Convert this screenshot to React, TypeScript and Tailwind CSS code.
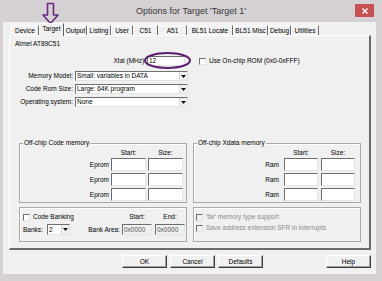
import React from 'react';

const sunken =
  'border border-t-[#6e6e6e] border-l-[#6e6e6e] border-r-[#e4e4e4] border-b-[#e4e4e4]';

function Check({ disabled = false }: { disabled?: boolean }) {
  return (
    <span
      className={`inline-block w-[7px] h-[7px] shrink-0 ${sunken} ${disabled ? 'bg-[#f0f0f0]' : 'bg-white'}`}
    />
  );
}

function Arrow() {
  return (
    <span className="w-[8px] h-full flex items-center justify-center bg-[#f0f0f0] border-l border-l-[#d6d6d6]">
      <svg width="5" height="3" viewBox="0 0 5 3">
        <path d="M0 0h5L2.5 3z" fill="#111" />
      </svg>
    </span>
  );
}

function Select({ value, className }: { value: string; className: string }) {
  return (
    <div className={`flex items-stretch bg-white ${sunken} ${className}`}>
      <span className="flex-1 pl-[1px] flex items-center">{value}</span>
      <Arrow />
    </div>
  );
}

function Group({
  title,
  className,
  children,
}: {
  title?: string;
  className: string;
  children: React.ReactNode;
}) {
  return (
    <div
      className={`relative border border-[#a9a9a9] shadow-[inset_1px_1px_0_#ffffff] ${className}`}
    >
      {title && (
        <span className="absolute -top-[5px] left-[3px] bg-[#f0f0f0] px-[1px]">{title}</span>
      )}
      {children}
    </div>
  );
}

interface MemProps {
  title: string;
  label: string;
  labelW: string;
  gap1: string;
  inputW: string;
  gap2: string;
}

function MemGroup({ title, label, labelW, gap1, inputW, gap2 }: MemProps) {
  const rows = [0, 1, 2];
  return (
    <Group title={title} className="w-[168px] h-[60px]">
      <div className="pt-[5px] flex flex-col">
        <div className="flex h-[8px]">
          <span className={labelW} />
          <span className={`${gap1} ${inputW} text-center`}>Start:</span>
          <span className={`${gap2} ${inputW} text-center`}>Size:</span>
        </div>
        <div className="mt-[1px] flex flex-col gap-[2px]">
          {rows.map((r) => (
            <div key={r} className="flex items-center h-[13px]">
              <span className={`${labelW} text-right`}>{label}</span>
              <span className={`${gap1} ${inputW} h-[13px] bg-white ${sunken}`} />
              <span className={`${gap2} ${inputW} h-[13px] bg-white ${sunken}`} />
            </div>
          ))}
        </div>
      </div>
    </Group>
  );
}

const tabs: { name: string; w: string }[] = [
  { name: 'Device', w: 'w-[28px]' },
  { name: 'Target', w: 'w-[25px]' },
  { name: 'Output', w: 'w-[23px]' },
  { name: 'Listing', w: 'w-[24px]' },
  { name: 'User', w: 'w-[22px]' },
  { name: 'C51', w: 'w-[25px]' },
  { name: 'A51', w: 'w-[29px]' },
  { name: 'BL51 Locate', w: 'w-[46px]' },
  { name: 'BL51 Misc', w: 'w-[35px]' },
  { name: 'Debug', w: 'w-[23px]' },
  { name: 'Utilities', w: 'w-[28px]' },
];

const button =
  'w-[45px] h-[13px] flex items-center justify-center bg-[#f0f0f0] border border-t-white border-l-white border-r-[#3c3c3c] border-b-[#3c3c3c] shadow-[inset_-1px_-1px_0_#a0a0a0]';

export default function App() {
  return (
    <div className="relative w-[382px] h-[281px] overflow-hidden whitespace-nowrap bg-[#d4d0d3] flex flex-col font-['Liberation_Sans',Arial,sans-serif] text-[6.5px] leading-[8px] text-black">
      {/* Title bar */}
      <div className="h-[22px] flex items-start">
        <span className="w-[27px]" />
        <span className="flex-1 text-center text-[9px] leading-[22px] text-[#383838]">
          Options for Target 'Target 1'
        </span>
        <span className="mt-[4px] mr-[8px] w-[19px] h-[13px] bg-[#c75050] flex items-center justify-center">
          <svg width="6" height="6" viewBox="0 0 6 6">
            <path d="M0.5 0.5L5.5 5.5M5.5 0.5L0.5 5.5" stroke="#fff" strokeWidth="1.4" />
          </svg>
        </span>
      </div>

      {/* Client area */}
      <div className="ml-[3px] mr-[6px] h-[252px] bg-[#f0f0f0] flex flex-col">
        {/* Tabs */}
        <div className="mt-[1px] h-[12px] pl-[8px] flex items-end relative z-10">
          {tabs.map((t) =>
            t.name === 'Target' ? (
              <span
                key={t.name}
                className={`${t.w} h-[13px] -mb-[1px] pb-[2px] flex items-center justify-center bg-[#f0f0f0] border-t border-l border-t-white border-l-white border-r border-r-[#5e5e5e]`}
              >
                {t.name}
              </span>
            ) : (
              <span
                key={t.name}
                className={`${t.w} h-[10px] flex items-center justify-center border-t border-l border-t-white border-l-white border-r border-r-[#6a6a6a]`}
              >
                {t.name}
              </span>
            )
          )}
        </div>

        {/* Tab panel */}
        <div className="ml-[6px] w-[362px] h-[215px] border-t border-l border-t-white border-l-white border-r-2 border-b-2 border-r-[#6a6a6a] border-b-[#6a6a6a] flex flex-col">
          <div className="mt-[4px] ml-[5px] h-[8px]">Atmel AT89C51</div>

          <div className="mt-[8px] h-[10px] flex items-center">
            <span className="w-[137px] pr-[1px] text-right">Xtal (MHz):</span>
            <span className={`w-[38px] h-[10px] bg-white flex items-center pl-[1px] ${sunken}`}>12</span>
            <span className="ml-[14px] flex items-center">
              <Check />
              <span className="ml-[3px]">Use On-chip ROM (0x0-0xFFF)</span>
            </span>
          </div>

          <div className="mt-[5px] flex flex-col gap-[3px]">
            {[
              ['Memory Model:', 'Small: variables in DATA'],
              ['Code Rom Size:', 'Large: 64K program'],
              ['Operating system:', 'None'],
            ].map(([l, v]) => (
              <div key={l} className="flex items-center h-[10px]">
                <span className="w-[63px] text-right">{l}</span>
                <Select value={v} className="ml-[2px] w-[113px] h-[10px]" />
              </div>
            ))}
          </div>

          <div className="mt-[36px] ml-[9px] flex">
            <MemGroup
              title="Off-chip Code memory"
              label="Eprom"
              labelW="w-[89px]"
              gap1="ml-[2px]"
              inputW="w-[35px]"
              gap2="ml-[2px]"
            />
            <div className="ml-[6px]">
              <MemGroup
                title="Off-chip Xdata memory"
                label="Ram"
                labelW="w-[85px]"
                gap1="ml-[5px]"
                inputW="w-[34px]"
                gap2="ml-[3px]"
              />
            </div>
          </div>

          <div className="mt-[4px] ml-[9px] flex">
            <Group className="w-[168px] h-[35px]">
              <div className="pt-[5px] flex flex-col">
                <div className="flex items-center h-[8px]">
                  <div className="w-[102px] flex items-center pl-[3px]">
                    <Check />
                    <span className="ml-[3px]">Code Banking</span>
                  </div>
                  <span className="w-[30px] text-center">Start:</span>
                  <span className="ml-[3px] w-[30px] text-center">End:</span>
                </div>
                <div className="mt-[3px] flex items-center h-[11px]">
                  <div className="w-[102px] flex items-center pl-[3px]">
                    <span>Banks:</span>
                    <Select value="2" className="ml-[4px] w-[23px] h-[11px]" />
                    <span className="flex-1 text-right pr-[2px]">Bank Area:</span>
                  </div>
                  <span className={`w-[30px] h-[11px] bg-[#f0f0f0] text-[#555] flex items-center pl-[1px] ${sunken}`}>
                    0x0000
                  </span>
                  <span className={`ml-[3px] w-[30px] h-[11px] bg-[#f0f0f0] text-[#555] flex items-center pl-[1px] ${sunken}`}>
                    0x0000
                  </span>
                </div>
              </div>
            </Group>
            <div className="ml-[6px]">
              <Group className="w-[168px] h-[35px]">
                <div className="pt-[5px] pl-[2px] flex flex-col text-[#8a8a8a]">
                  <div className="flex items-center h-[8px]">
                    <Check disabled />
                    <span className="ml-[3px]">'far' memory type support</span>
                  </div>
                  <div className="mt-[3px] flex items-center h-[8px]">
                    <Check disabled />
                    <span className="ml-[3px]">Save address extension SFR in interrupts</span>
                  </div>
                </div>
              </Group>
            </div>
          </div>
        </div>

        {/* Buttons */}
        <div className="mt-[5px] ml-[119px] flex">
          <span className={button}>OK</span>
          <span className={`ml-[3px] ${button}`}>Cancel</span>
          <span className={`ml-[3px] ${button}`}>Defaults</span>
          <span className={`ml-[63px] ${button}`}>Help</span>
        </div>
      </div>

      {/* Annotations drawn over the screenshot */}
      <svg className="absolute left-[42px] top-[2px]" width="17" height="23" viewBox="0 0 17 23">
        <path
          d="M5.5 1.5H11.5V13H16L8.5 21.5L1 13H5.5Z"
          fill="none"
          stroke="#6b2a80"
          strokeWidth="1.6"
          strokeLinejoin="round"
        />
      </svg>
      <svg className="absolute left-[143px] top-[51px]" width="50" height="19" viewBox="0 0 50 19">
        <ellipse cx="24.5" cy="9.5" rx="22.5" ry="7.5" fill="none" stroke="#5b1f70" strokeWidth="2" />
      </svg>
    </div>
  );
}
